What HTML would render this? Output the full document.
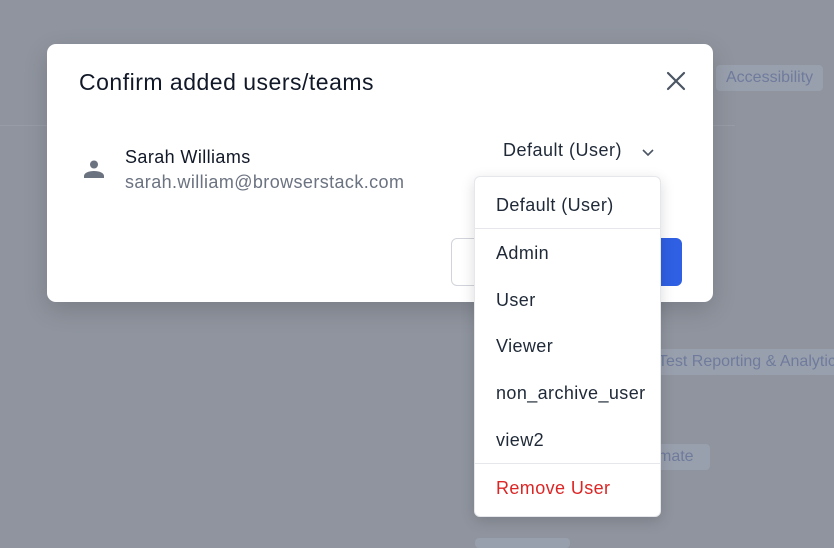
<!DOCTYPE html>
<html><head><meta charset="utf-8"><style>
*{margin:0;padding:0;box-sizing:border-box}
body{width:834px;height:544px;overflow:hidden;background:#8f949e;font-family:"Liberation Sans",sans-serif;position:relative}
.badge{position:absolute;background:#99a0ad;border-radius:4px;color:#6f7b9c;font-size:16px;padding:0 10px;line-height:26px;white-space:nowrap;overflow:hidden}
.line{position:absolute;left:0;top:125px;width:735px;height:1px;background:#979ca6}
.modal{position:absolute;left:47px;top:44px;width:666px;height:258px;background:#fff;border-radius:9px;box-shadow:0 8px 24px rgba(0,0,0,.15)}
.title{position:absolute;left:32px;top:25px;font-size:23px;letter-spacing:.5px;color:#111827}
.close{position:absolute;left:619px;top:27px}
.name{position:absolute;left:78px;top:103px;font-size:18px;letter-spacing:.4px;color:#111827}
.email{position:absolute;left:78px;top:128px;font-size:18px;letter-spacing:.4px;color:#6b7280}
.sel{position:absolute;left:456px;top:96px;font-size:18px;letter-spacing:.5px;color:#1f2937;white-space:nowrap}
.btn1{position:absolute;left:404px;top:194px;width:80px;height:48px;border:1px solid #d1d5db;border-radius:6px}
.btn2{position:absolute;left:560px;top:194px;width:75px;height:48px;background:#2f5fe3;border-radius:6px}
.dd{position:absolute;left:474px;top:176px;width:187px;height:341px;background:#fff;border-radius:6px;box-shadow:0 4px 14px rgba(0,0,0,.15);border:1px solid #e5e7eb}
.it{position:absolute;left:21px;font-size:18px;letter-spacing:.4px;color:#1f2937;white-space:nowrap}
.sep{position:absolute;left:0;width:100%;height:1px;background:#e5e7eb}
</style></head><body>
<div class="line"></div>
<div class="badge" style="left:716px;top:65px">Accessibility</div>
<div class="badge" style="left:640px;top:349px;padding-left:18px;width:200px">Test Reporting &amp; Analytics</div>
<div class="badge" style="left:640px;top:444px;padding-left:18px;width:70px">mate</div>
<div class="badge" style="left:475px;top:538px;width:95px;height:10px"></div>
<div class="modal">
<div class="title">Confirm added users/teams</div>
<svg class="close" width="20" height="20" viewBox="0 0 20 20"><path d="M2 2L18 18M18 2L2 18" stroke="#4b5563" stroke-width="2.2" stroke-linecap="round"/></svg>
<svg style="position:absolute;left:35px;top:113px" width="24" height="24" viewBox="0 0 24 24"><circle cx="12" cy="7.5" r="4" fill="#6b7280"/><path d="M2 21v-2c0-3 4.5-5 10-5s10 2 10 5v2z" fill="#6b7280"/></svg>
<div class="name">Sarah Williams</div>
<div class="email">sarah.william@browserstack.com</div>
<div class="sel">Default (User)</div>
<svg style="position:absolute;left:594px;top:101px" width="14" height="14" viewBox="0 0 14 14"><path d="M2 5l5 5 5-5" stroke="#4b5563" stroke-width="1.6" fill="none"/></svg>
<div class="btn1"></div>
<div class="btn2"></div>
</div>
<div class="dd">
<div class="it" style="top:18px">Default (User)</div>
<div class="sep" style="top:51px"></div>
<div class="it" style="top:66px">Admin</div>
<div class="it" style="top:113px">User</div>
<div class="it" style="top:159px">Viewer</div>
<div class="it" style="top:206px">non_archive_user</div>
<div class="it" style="top:253px">view2</div>
<div class="sep" style="top:286px"></div>
<div class="it" style="top:301px;color:#dc2626">Remove User</div>
</div>
</body></html>
